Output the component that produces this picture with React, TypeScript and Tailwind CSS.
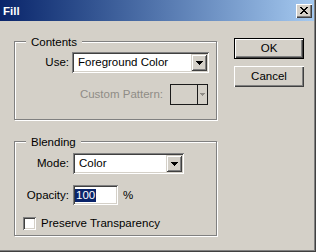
import React from 'react';

const sunken = 'shadow-[inset_1px_1px_0_#808080,inset_-1px_-1px_0_#fff,inset_2px_2px_0_#404040,inset_-2px_-2px_0_#d4d0c8]';
const raised = 'shadow-[inset_1px_1px_0_#fff,inset_-1px_-1px_0_#404040,inset_-2px_-2px_0_#808080]';

const DownArrow: React.FC<{ color?: string; w?: number; h?: number }> = ({ color = '#000', w = 7, h = 4 }) => (
  <svg width={w} height={h} viewBox={`0 0 ${w} ${h}`} shapeRendering="crispEdges">
    <polygon points={`0,0 ${w},0 ${w / 2},${h}`} fill={color} />
  </svg>
);

const DropButton: React.FC = () => (
  <div className="w-[16px] self-stretch flex items-center justify-center bg-[#d4d0c8] shadow-[inset_1px_1px_0_#d4d0c8,inset_-1px_-1px_0_#404040,inset_2px_2px_0_#fff,inset_-2px_-2px_0_#808080]">
    <DownArrow />
  </div>
);

const Select: React.FC<{ value: string; className?: string }> = ({ value, className }) => (
  <div className={`flex items-stretch bg-white p-[2px] ${sunken} ${className ?? ''}`}>
    <span className="flex-1 flex items-center pl-[4px] whitespace-nowrap">{value}</span>
    <DropButton />
  </div>
);

const Group: React.FC<{ title: string; className?: string; children: React.ReactNode }> = ({ title, className, children }) => (
  <div className={`relative border border-[#808080] shadow-[inset_1px_1px_0_#fff,1px_1px_0_#fff] ${className ?? ''}`}>
    <span className="absolute left-[11px] -top-[6px] px-[5px] bg-[#d4d0c8] leading-[13px]">{title}</span>
    {children}
  </div>
);

const CloseGlyph: React.FC = () => (
  <svg width="8" height="7" viewBox="0 0 8 7" shapeRendering="crispEdges" fill="#000">
    <rect x="0" y="0" width="2" height="1" />
    <rect x="6" y="0" width="2" height="1" />
    <rect x="1" y="1" width="2" height="1" />
    <rect x="5" y="1" width="2" height="1" />
    <rect x="2" y="2" width="4" height="1" />
    <rect x="3" y="3" width="2" height="1" />
    <rect x="2" y="4" width="4" height="1" />
    <rect x="1" y="5" width="2" height="1" />
    <rect x="5" y="5" width="2" height="1" />
    <rect x="0" y="6" width="2" height="1" />
    <rect x="6" y="6" width="2" height="1" />
  </svg>
);

export default function App() {
  return (
    <div className="w-[316px] h-[252px] bg-[#d4d0c8] pr-[2px] pb-[2px] flex flex-col shadow-[inset_-1px_-1px_0_#404040,inset_-2px_-2px_0_#808080] font-['Liberation_Sans',Arial,sans-serif] text-[11.5px] leading-[13px] text-black select-none">
      {/* title bar */}
      <div className="h-[21px] flex items-center bg-linear-to-r from-[#0a246a] to-[#a6caf0]">
        <span className="pl-[3px] pt-[2px] font-bold text-white">Fill</span>
        <div className={`ml-auto mr-[2px] w-[16px] h-[14px] flex items-center justify-center bg-[#d4d0c8] ${raised}`}>
          <CloseGlyph />
        </div>
      </div>

      <div className="flex">
        <div className="ml-[14px] mt-[20px] w-[203px] flex flex-col">
          <Group title="Contents" className="pt-[10px] pb-[14px]">
            <div className="flex items-center h-[21px]">
              <span className="w-[54px] text-right">Use:</span>
              <Select value="Foreground Color" className="ml-[3px] w-[137px] h-[21px]" />
            </div>
            <div className="flex items-center justify-end h-[21px] mt-[11px] pr-[8px]">
              <span className="text-[#8f8c86]">Custom Pattern:</span>
              <div className="ml-[7px] w-[38px] h-[21px] flex border border-[#1a1a1a]">
                <div className="w-[26px]" />
                <div className="w-[1px] bg-[#1a1a1a]" />
                <div className="flex-1 flex items-center justify-center">
                  <DownArrow color="#8f8c86" w={5} h={3} />
                </div>
              </div>
            </div>
          </Group>

          <Group title="Blending" className="mt-[21px] pt-[11px] pb-[5px]">
            <div className="flex items-center h-[21px]">
              <span className="w-[54px] text-right">Mode:</span>
              <Select value="Color" className="ml-[4px] w-[111px] h-[21px]" />
            </div>
            <div className="flex items-center h-[20px] mt-[11px]">
              <span className="w-[54px] text-right">Opacity:</span>
              <div className={`ml-[4px] w-[45px] h-[20px] bg-white p-[2px] flex items-center ${sunken}`}>
                <span className="bg-[#0a246a] text-white px-[1px]">100</span>
              </div>
              <span className="ml-[5px]">%</span>
            </div>
            <div className="flex items-center h-[13px] mt-[12px] pl-[8px]">
              <div className={`w-[13px] h-[13px] bg-white ${sunken}`} />
              <span className="ml-[5px]">Preserve Transparency</span>
            </div>
          </Group>
        </div>

        <div className="ml-[17px] mt-[17px] w-[70px] flex flex-col">
          <button className="w-[70px] h-[21px] border border-black bg-[#d4d0c8] shadow-[inset_1px_1px_0_#fff,inset_-1px_-1px_0_#404040,inset_-2px_-2px_0_#808080]">
            OK
          </button>
          <button className={`mt-[7px] w-[70px] h-[21px] bg-[#d4d0c8] ${raised}`}>Cancel</button>
        </div>
      </div>
    </div>
  );
}
